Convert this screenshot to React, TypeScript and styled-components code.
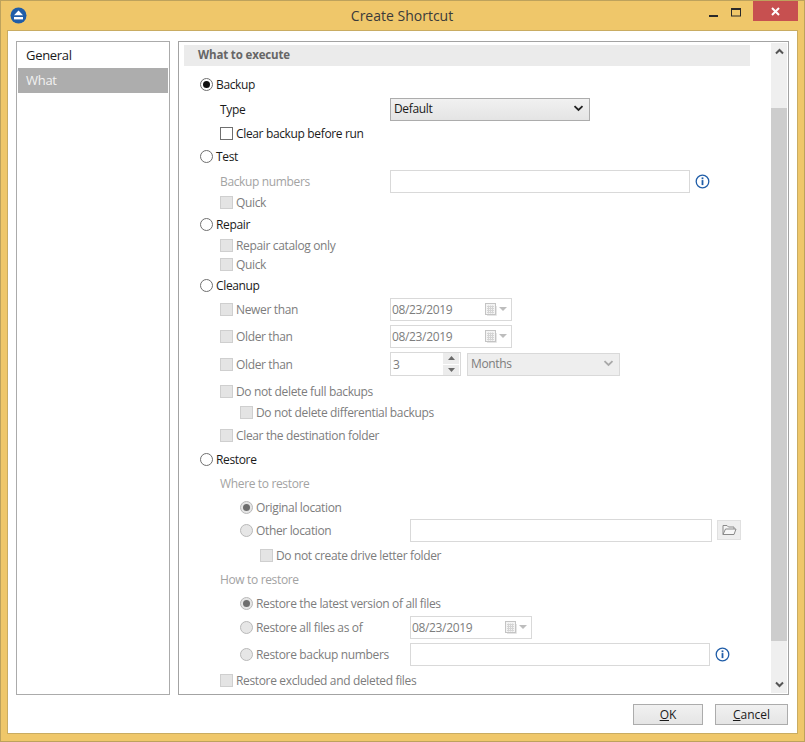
import React from "react";
import styled, { createGlobalStyle } from "styled-components";

const Global = createGlobalStyle`
  html, body { margin: 0; padding: 0; background: #f0c86b; }
  * { box-sizing: border-box; }
`;

const Window = styled.div`
  width: 805px; height: 742px; display: flex; flex-direction: column;
  background: #efc76a; border: 1px solid #bda25c;
  font-family: "Open Sans", "Noto Sans", sans-serif; font-size: 12px; color: #1a1a1a;
  letter-spacing: -0.35px;
`;
const TitleBar = styled.div`
  height: 29px; flex: none; display: flex; align-items: flex-start; position: relative; padding-left: 9px;
`;
const TitleText = styled.div`
  position: absolute; left: 0; right: 0; top: 5px; text-align: center; font-size: 14px; color: #3a3a3a; letter-spacing: 0; margin-right: 1px;
`;
const Logo = styled.svg`width: 17px; height: 17px; margin-top: 6px; flex: none;`;
const WinButtons = styled.div`margin-left: auto; display: flex; align-items: flex-start; padding-right: 6px;`;
const WinBtn = styled.div<{ $w: number }>`
  width: ${p => p.$w}px; height: 20px; display: flex; align-items: center; justify-content: center;
`;
const CloseBtn = styled(WinBtn)`background: #c75050;`;

const Client = styled.div`
  flex: 1; min-height: 0; margin: 0 6px 7px; background: #fff; border: 1px solid #c9ac62;
  padding: 10px 8px 0 8px; display: flex; flex-direction: column;
`;
const Main = styled.div`height: 654px; flex: none; display: flex; gap: 8px;`;
const SideList = styled.div`width: 154px; flex: none; border: 1px solid #ababab; padding: 1px;`;
const SideItem = styled.div<{ $active?: boolean }>`
  height: 25px; display: flex; align-items: center; padding: 0 0 2px 8px; font-size: 13px; letter-spacing: -0.3px;
  background: ${p => (p.$active ? "#adadad" : "#fff")};
  color: ${p => (p.$active ? "#f2f2f2" : "#1a1a1a")};
`;
const Panel = styled.div`flex: 1; min-width: 0; border: 1px solid #a3a3a3; display: flex; overflow: hidden;`;
const Content = styled.div`flex: 1; min-width: 0; padding: 3px 21px 0 5px; overflow: hidden;`;
const SectionHead = styled.div`
  height: 21px; background: #ebebeb; color: #666; font-weight: 700; font-size: 11.5px; letter-spacing: -0.15px;
  padding: 0 0 2px 14px; display: flex; align-items: center; margin-bottom: 9px;
`;
const Form = styled.div`padding-left: 16px;`;
const Row = styled.div<{ $gap: number; $col?: number }>`
  height: 18px; margin-top: ${p => p.$gap}px; display: grid; align-items: center;
  grid-template-rows: 18px;
  grid-template-columns: ${p => p.$col ?? 190}px auto;
`;
const Lead = styled.div<{ $indent?: number }>`
  display: flex; align-items: center; padding-left: ${p => p.$indent ?? 0}px; white-space: nowrap;
`;
const Controls = styled.div`display: flex; align-items: center; gap: 5px;`;
const Text = styled.span<{ $off?: boolean; $mute?: boolean }>`
  color: ${p => (p.$mute ? "#a3a3a3" : p.$off ? "#7d7d7d" : "#1a1a1a")};
`;
const RadioBox = styled.span<{ $off?: boolean }>`
  width: 13px; height: 13px; border-radius: 50%; flex: none; margin-right: 3px; display: flex; align-items: center; justify-content: center;
  border: 1px solid ${p => (p.$off ? "#b9b9b9" : "#6f6f6f")};
  background: ${p => (p.$off ? "#e6e6e6" : "#fff")};
`;
const RadioDot = styled.span<{ $off?: boolean }>`
  width: 7px; height: 7px; border-radius: 50%; background: ${p => (p.$off ? "#6e6e6e" : "#111")};
`;
const Check = styled.span<{ $off?: boolean }>`
  width: 13px; height: 13px; flex: none; margin-right: 3px;
  border: 1px solid ${p => (p.$off ? "#cfcfcf" : "#6f6f6f")};
  background: ${p => (p.$off ? "#e4e4e4" : "#fff")};
`;
const SelectBox = styled.div`
  width: 200px; height: 23px; border: 1px solid #acacac; background: linear-gradient(#f1f1f1, #e4e4e4);
  display: flex; align-items: center; justify-content: space-between; padding: 0 5px 2px 3px; color: #1a1a1a;
`;
const TextBox = styled.div<{ $w: number }>`
  width: ${p => p.$w}px; height: 23px; border: 1px solid #d9d9d9; background: #fff;
`;
const DateBox = styled.div`
  width: 122px; height: 23px; border: 1px solid #d9d9d9; background: #fff; color: #7d7d7d;
  display: flex; align-items: center; justify-content: space-between; padding: 0 4px 0 1px;
`;
const DateIcons = styled.div`display: flex; align-items: center; gap: 2px;`;
const SpinBox = styled.div`
  width: 71px; height: 24px; border: 1px solid #d9d9d9; background: #fff; color: #7d7d7d;
  display: flex; align-items: center; justify-content: space-between; padding-left: 2px;
`;
const SpinBtns = styled.div`
  width: 16px; height: 22px; margin-right: 1px; display: flex; flex-direction: column; gap: 1px;
`;
const SpinBtn = styled.div`
  flex: 1; background: #ececec; display: flex; align-items: center; justify-content: center;
`;
const MonthSelect = styled.div`
  width: 153px; height: 23px; border: 1px solid #d9d9d9; background: #eeeeee; color: #7d7d7d;
  display: flex; align-items: center; justify-content: space-between; padding: 0 5px 2px 3px; margin-left: 1px;
`;
const FolderBtn = styled.div`
  width: 24px; height: 20px; background: #eeeeee; border: 1px solid #e0e0e0; display: flex; align-items: center; justify-content: center;
`;
const Scroll = styled.div`
  width: 16px; flex: none; margin: 1px 1px 1px 0; background: #efefef; display: flex; flex-direction: column;
`;
const ScrollArrow = styled.div`height: 17px; flex: none; display: flex; align-items: center; justify-content: center;`;
const ScrollSpace = styled.div`flex: none; height: 48px;`;
const ScrollThumb = styled.div`flex: none; height: 533px; background: #cdcdcd;`;
const ScrollRest = styled.div`flex: 1;`;
const Footer = styled.div`flex: 1; display: flex; justify-content: flex-end; gap: 12px; padding: 9px 1px 0 0; align-items: flex-start;`;
const DialogBtn = styled.div<{ $w: number }>`
  width: ${p => p.$w}px; height: 21px; border: 1px solid #acacac; background: linear-gradient(#f1f1f1, #e5e5e5);
  display: flex; align-items: center; justify-content: center; color: #1a1a1a; letter-spacing: 0;
`;

const Radio = ({ on, off }: { on?: boolean; off?: boolean }) => (
  <RadioBox $off={off}>{on && <RadioDot $off={off} />}</RadioBox>
);
const Info = () => (
  <svg width="15" height="15" viewBox="0 0 15 15">
    <circle cx="7.5" cy="7.5" r="6.3" fill="#fff" stroke="#1f5da8" strokeWidth="1.3" />
    <rect x="6.6" y="3.4" width="1.8" height="1.8" fill="#1f5da8" />
    <rect x="6.6" y="6.1" width="1.8" height="5" fill="#1f5da8" />
  </svg>
);
const Chevron = ({ color = "#222" }: { color?: string }) => (
  <svg width="11" height="7" viewBox="0 0 11 7">
    <path d="M1.5 1.2 L5.5 5 L9.5 1.2" fill="none" stroke={color} strokeWidth="1.8" />
  </svg>
);
const CalendarDrop = () => (
  <DateIcons>
    <svg width="12" height="13" viewBox="0 0 12 13">
      <rect x="0.5" y="0.5" width="10" height="11" fill="#f4f4f4" stroke="#c4c4c4" />
      <path d="M2 3.5H9M2 5.5H9M2 7.5H9M2 9.5H9M3.5 2.5V10.5M5.5 2.5V10.5M7.5 2.5V10.5" stroke="#d4d4d4" strokeWidth="1" />
      <path d="M11.5 3V12.5H2" fill="none" stroke="#e6e6e6" />
    </svg>
    <svg width="8" height="4" viewBox="0 0 8 4"><path d="M0 0H8L4 4Z" fill="#bdbdbd" /></svg>
  </DateIcons>
);
const DateField = () => (
  <DateBox><span>08/23/2019</span><CalendarDrop /></DateBox>
);

export default function App() {
  return (
    <>
      <Global />
      <Window>
        <TitleBar>
          <Logo viewBox="0 0 17 17">
            <circle cx="8.5" cy="8.5" r="8" fill="#1f5da8" />
            <path d="M8.5 3.6 L13 8.3 H4 Z" fill="#fff" />
            <rect x="4" y="10" width="9" height="2.4" fill="#fff" />
          </Logo>
          <TitleText>Create Shortcut</TitleText>
          <WinButtons>
            <WinBtn $w={27}>
              <svg width="9" height="4" viewBox="0 0 9 4" style={{ marginTop: 9 }}><rect width="9" height="2" y="1" fill="#2a2a2a" /></svg>
            </WinBtn>
            <WinBtn $w={17}>
              <svg width="10" height="9" viewBox="0 0 10 9" style={{ marginTop: 2 }}>
                <rect x="0.5" y="0.5" width="9" height="7.5" fill="none" stroke="#2a2a2a" />
                <rect width="10" height="2" fill="#2a2a2a" />
              </svg>
            </WinBtn>
            <WinBtn $w={9} />
            <CloseBtn $w={45}>
              <svg width="9" height="9" viewBox="0 0 9 9">
                <path d="M1 1L8 8M8 1L1 8" stroke="#fff" strokeWidth="2" />
              </svg>
            </CloseBtn>
          </WinButtons>
        </TitleBar>
        <Client>
          <Main>
            <SideList>
              <SideItem>General</SideItem>
              <SideItem $active>What</SideItem>
            </SideList>
            <Panel>
              <Content>
                <SectionHead>What to execute</SectionHead>
                <Form>
                  <Row $gap={0}><Lead><Radio on /><Text>Backup</Text></Lead></Row>
                  <Row $gap={7}>
                    <Lead $indent={20}><Text>Type</Text></Lead>
                    <Controls><SelectBox>Default<Chevron /></SelectBox></Controls>
                  </Row>
                  <Row $gap={6}><Lead $indent={20}><Check /><Text>Clear backup before run</Text></Lead></Row>
                  <Row $gap={5}><Lead><Radio /><Text>Test</Text></Lead></Row>
                  <Row $gap={7}>
                    <Lead $indent={20}><Text $mute>Backup numbers</Text></Lead>
                    <Controls><TextBox $w={300} /><Info /></Controls>
                  </Row>
                  <Row $gap={3}><Lead $indent={20}><Check $off /><Text $off>Quick</Text></Lead></Row>
                  <Row $gap={4}><Lead><Radio /><Text>Repair</Text></Lead></Row>
                  <Row $gap={3}><Lead $indent={20}><Check $off /><Text $off>Repair catalog only</Text></Lead></Row>
                  <Row $gap={1}><Lead $indent={20}><Check $off /><Text $off>Quick</Text></Lead></Row>
                  <Row $gap={3}><Lead><Radio /><Text>Cleanup</Text></Lead></Row>
                  <Row $gap={6}>
                    <Lead $indent={20}><Check $off /><Text $off>Newer than</Text></Lead>
                    <Controls><DateField /></Controls>
                  </Row>
                  <Row $gap={9}>
                    <Lead $indent={20}><Check $off /><Text $off>Older than</Text></Lead>
                    <Controls><DateField /></Controls>
                  </Row>
                  <Row $gap={10}>
                    <Lead $indent={20}><Check $off /><Text $off>Older than</Text></Lead>
                    <Controls>
                      <SpinBox>
                        <span>3</span>
                        <SpinBtns>
                          <SpinBtn><svg width="7" height="4" viewBox="0 0 7 4"><path d="M0 4H7L3.5 0Z" fill="#6a6a6a" /></svg></SpinBtn>
                          <SpinBtn><svg width="7" height="4" viewBox="0 0 7 4"><path d="M0 0H7L3.5 4Z" fill="#6a6a6a" /></svg></SpinBtn>
                        </SpinBtns>
                      </SpinBox>
                      <MonthSelect>Months<Chevron color="#a8a8a8" /></MonthSelect>
                    </Controls>
                  </Row>
                  <Row $gap={9}><Lead $indent={20}><Check $off /><Text $off>Do not delete full backups</Text></Lead></Row>
                  <Row $gap={3}><Lead $indent={40}><Check $off /><Text $off>Do not delete differential backups</Text></Lead></Row>
                  <Row $gap={5}><Lead $indent={20}><Check $off /><Text $off>Clear the destination folder</Text></Lead></Row>
                  <Row $gap={6}><Lead><Radio /><Text>Restore</Text></Lead></Row>
                  <Row $gap={6}><Lead $indent={20}><Text $mute>Where to restore</Text></Lead></Row>
                  <Row $gap={6}><Lead $indent={40}><Radio on off /><Text $off>Original location</Text></Lead></Row>
                  <Row $gap={5} $col={210}>
                    <Lead $indent={40}><Radio off /><Text $off>Other location</Text></Lead>
                    <Controls><TextBox $w={302} /><FolderBtn>
                      <svg width="15" height="12" viewBox="0 0 15 12">
                        <path d="M1 10.5V1.5H5L6.5 3H12V5" fill="#f4f4f4" stroke="#8a8a8a" />
                        <path d="M1 10.5L3.5 5H14L12 10.5Z" fill="#f7f7f7" stroke="#8a8a8a" />
                      </svg>
                    </FolderBtn></Controls>
                  </Row>
                  <Row $gap={7}><Lead $indent={60}><Check $off /><Text $off>Do not create drive letter folder</Text></Lead></Row>
                  <Row $gap={6}><Lead $indent={20}><Text $mute>How to restore</Text></Lead></Row>
                  <Row $gap={6}><Lead $indent={40}><Radio on off /><Text $off>Restore the latest version of all files</Text></Lead></Row>
                  <Row $gap={6} $col={210}>
                    <Lead $indent={40}><Radio off /><Text $off>Restore all files as of</Text></Lead>
                    <Controls><DateField /></Controls>
                  </Row>
                  <Row $gap={9} $col={210}>
                    <Lead $indent={40}><Radio off /><Text $off>Restore backup numbers</Text></Lead>
                    <Controls><TextBox $w={300} /><Info /></Controls>
                  </Row>
                  <Row $gap={8}><Lead $indent={20}><Check $off /><Text $off>Restore excluded and deleted files</Text></Lead></Row>
                </Form>
              </Content>
              <Scroll>
                <ScrollArrow>
                  <svg width="9" height="7" viewBox="0 0 9 7"><path d="M1 5.5L4.5 2L8 5.5" fill="none" stroke="#555" strokeWidth="2" /></svg>
                </ScrollArrow>
                <ScrollSpace />
                <ScrollThumb />
                <ScrollRest />
                <ScrollArrow>
                  <svg width="9" height="7" viewBox="0 0 9 7"><path d="M1 1.5L4.5 5L8 1.5" fill="none" stroke="#555" strokeWidth="2" /></svg>
                </ScrollArrow>
              </Scroll>
            </Panel>
          </Main>
          <Footer>
            <DialogBtn $w={70}><span><u>O</u>K</span></DialogBtn>
            <DialogBtn $w={73}><span><u>C</u>ancel</span></DialogBtn>
          </Footer>
        </Client>
      </Window>
    </>
  );
}
